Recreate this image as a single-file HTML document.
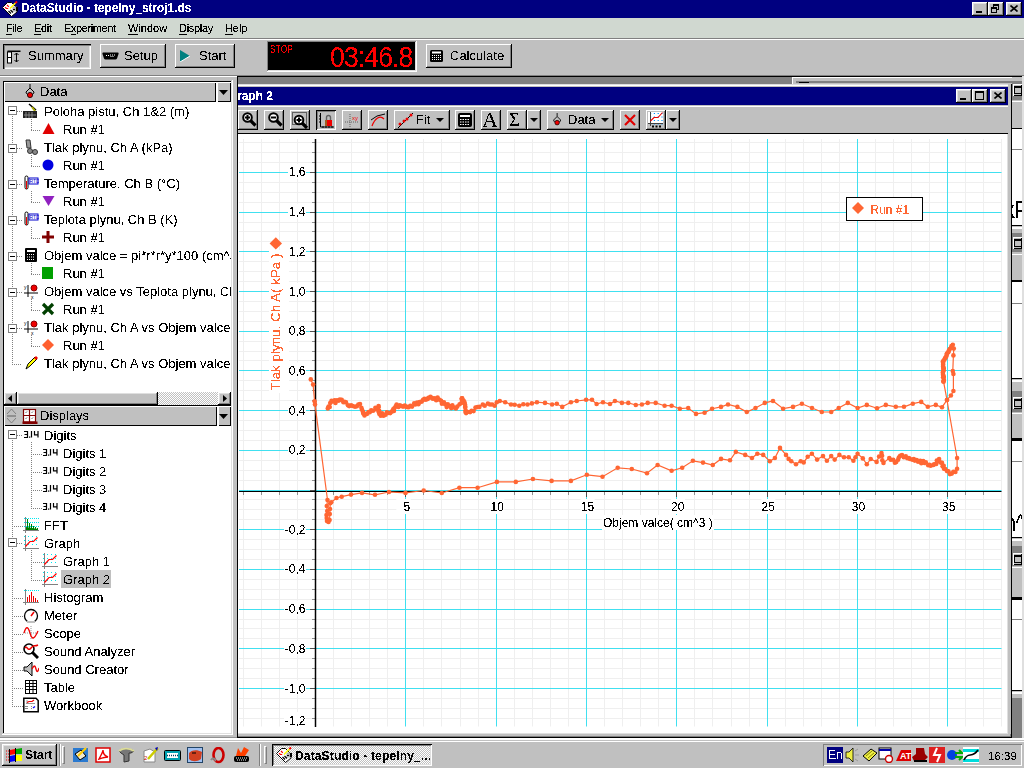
<!DOCTYPE html><html><head><meta charset="utf-8"><title>DataStudio</title><style>

*{box-sizing:border-box;margin:0;padding:0}
html,body{width:1024px;height:768px;overflow:hidden;background:#c0c0c0;font-family:"Liberation Sans",sans-serif;position:relative}
.a{position:absolute}
.t{position:absolute;white-space:nowrap;line-height:1;filter:url(#crisp)}
.raised{background:#c0c0c0;box-shadow:inset -1px -1px #000,inset 1px 1px #fff,inset -2px -2px #808080,inset 2px 2px #dfdfdf}
.raised1{background:#c0c0c0;box-shadow:inset -1px -1px #000,inset 1px 1px #fff,inset -2px -2px #808080}
.pressed{background:#c0c0c0;box-shadow:inset 1px 1px #000,inset -1px -1px #fff,inset 2px 2px #808080,inset -2px -2px #dfdfdf}
.sunken{box-shadow:inset 1px 1px #808080,inset -1px -1px #fff,inset 2px 2px #000,inset -2px -2px #dfdfdf}
.tbtn{position:absolute;width:16px;height:14px;background:#c0c0c0;box-shadow:inset -1px -1px #000,inset 1px 1px #fff,inset -2px -2px #808080,inset 2px 2px #dfdfdf}
.tree{font-size:13px;color:#000}
u{text-decoration:none;border-bottom:1px solid #000}

</style></head><body>
<svg width="0" height="0" style="position:absolute"><filter id="crisp" color-interpolation-filters="sRGB"><feComponentTransfer><feFuncA type="discrete" tableValues="0 0 0 0 1 1 1 1 1"/></feComponentTransfer></filter></svg>
<div class="a" style="left:0;top:0;width:1024px;height:18px;background:#000080"></div>
<svg class="a" style="left:0;top:0" width="19" height="18" viewBox="0 0 19 18"><path d="M2.5 7.5 L7.5 2.5 L11.5 2.5 L17 8 L17 12 L11.5 16.5 Z" fill="#fff" stroke="#000"/><path d="M7 5 L8.8 6.8 M5 7.2 L6.5 8.5 L8.2 8.5" stroke="#f00" stroke-width="1.2" fill="none"/><rect x="12.5" y="6.5" width="4" height="5" fill="#b0b0b0"/><rect x="16" y="7" width="2" height="4" fill="#000"/><path d="M8.5 11 L11 13.5 M10.5 10 L13 12.5 M13 9.5 H15" stroke="#000" stroke-width="1.2"/><path d="M10 8.5 L15.5 3" stroke="#ff0" stroke-width="1.6"/><path d="M15.3 3.2 L17 1.5" stroke="#f00" stroke-width="1.8"/></svg>
<div class="t" style="left:21px;top:2px;font-size:12px;font-weight:bold;color:#fff;letter-spacing:-0.08px">DataStudio - tepelny_stroj1.ds</div>
<div class="tbtn" style="left:972px;top:2px"><div class="a" style="left:4px;top:9px;width:6px;height:2px;background:#000"></div></div>
<div class="tbtn" style="left:988px;top:2px"><div class="a" style="left:5px;top:2px;width:6px;height:6px;border:1px solid #000;border-top-width:2px"></div><div class="a" style="left:3px;top:5px;width:6px;height:6px;border:1px solid #000;border-top-width:2px;background:#c0c0c0"></div></div>
<div class="tbtn" style="left:1006px;top:2px"><svg class="a" style="left:4px;top:3px" width="8" height="7"><path d="M0.5 0.5 L7.5 6.5 M7.5 0.5 L0.5 6.5" stroke="#000" stroke-width="1.6"/></svg></div>
<div class="a" style="left:0;top:18px;width:1024px;height:20px;background:#d0d8d0"></div>
<div class="a" style="left:0;top:38px;width:1024px;height:1px;background:#808080"></div>
<div class="a" style="left:0;top:39px;width:1024px;height:1px;background:#fff"></div>
<div class="t" style="left:6px;top:23px;font-size:11px;color:#000;letter-spacing:-0.4px"><u>F</u>ile</div>
<div class="t" style="left:34px;top:23px;font-size:11px;color:#000;letter-spacing:-0.3px"><u>E</u>dit</div>
<div class="t" style="left:64px;top:23px;font-size:11px;color:#000;letter-spacing:-0.4px">E<u>x</u>periment</div>
<div class="t" style="left:128px;top:23px;font-size:11px;color:#000;letter-spacing:0px"><u>W</u>indow</div>
<div class="t" style="left:179px;top:23px;font-size:11px;color:#000;letter-spacing:-0.3px"><u>D</u>isplay</div>
<div class="t" style="left:225px;top:23px;font-size:11px;color:#000;letter-spacing:-0.1px"><u>H</u>elp</div>
<div class="a" style="left:3px;top:44px;width:88px;height:25px;background:#c0c0c0;box-shadow:inset 1px 1px #000,inset 2px 2px #808080,inset -1px -1px #fff,inset -2px -2px #dfdfdf"></div>
<svg class="a" style="left:7px;top:50px" width="14" height="14" viewBox="0 0 14 14">
<rect x="0.5" y="0.5" width="13" height="1.5" fill="#000"/>
<rect x="0.5" y="2" width="4" height="11" fill="#fff" stroke="#000"/><line x1="0.5" y1="7.5" x2="4.5" y2="7.5" stroke="#000"/>
<path d="M9.5 3 V12 M7.5 5 L9.5 3 L11.5 5 M7.5 10 L9.5 12 L11.5 10" stroke="#000" fill="none"/>
</svg>
<div class="t" style="left:28px;top:49px;font-size:13px">Summary</div>
<div class="a raised1" style="left:100px;top:44px;width:66px;height:24px"></div>
<svg class="a" style="left:102px;top:52px" width="17" height="8" viewBox="0 0 17 8"><path d="M1 0.5 H16 Q17 0.5 16.5 2 L15 6.5 Q14.5 7.5 13.5 7.5 H3.5 Q2.5 7.5 2 6.5 L0.5 2 Q0 0.5 1 0.5Z" fill="#000"/><path d="M4 3.5 H7 M8 3 H13 M8.5 4.5 H12.5" stroke="#fff" stroke-dasharray="1 1"/></svg>
<div class="t" style="left:124px;top:49px;font-size:13px">Setup</div>
<div class="a raised1" style="left:175px;top:44px;width:60px;height:24px"></div>
<svg class="a" style="left:180px;top:50px" width="10" height="12"><path d="M0 0 L10 6 L0 12 Z" fill="#008080"/><path d="M0 12 L10 6" stroke="#fff"/></svg>
<div class="t" style="left:199px;top:49px;font-size:13px">Start</div>
<div class="a" style="left:267px;top:41px;width:150px;height:31px;background:#000;box-shadow:inset -1px -1px #fff,inset 1px 1px #808080,inset -2px -2px #dfdfdf"></div>
<div class="t" style="left:270px;top:45px;font-size:8px;color:#f00;letter-spacing:0.4px;transform:scaleY(1.25);transform-origin:0 0">STOP</div>
<div class="t" style="left:330px;top:43px;font-size:26.5px;color:#f00;letter-spacing:-0.85px;transform:scaleY(1.1);transform-origin:0 0">03:46.8</div>
<div class="a raised1" style="left:426px;top:44px;width:86px;height:24px"></div>
<svg class="a" style="left:430px;top:50px" width="13" height="12" viewBox="0 0 13 12"><rect x="0" y="0" width="13" height="12" rx="1.5" fill="#000"/><rect x="2" y="1.5" width="9" height="2" fill="#fff"/><path d="M2 5.5 H11 M2 7.5 H11 M2 9.5 H11" stroke="#fff" stroke-dasharray="1 1"/></svg>
<div class="t" style="left:450px;top:49px;font-size:13px">Calculate</div>
<div class="a" style="left:0;top:75px;width:1024px;height:1px;background:#808080"></div>
<div class="a" style="left:0;top:76px;width:237px;height:1px;background:#fff"></div>
<div class="a" style="left:3px;top:81px;width:229px;height:325px;background:#fff;border-left:1px solid #000;border-top:1px solid #000"></div>
<div class="a" style="left:4px;top:82px;width:212px;height:20px;background:#c0c0c0;box-shadow:inset 1px 1px #fff,inset -1px -1px #000"></div>
<div class="a" style="left:217px;top:82px;width:14px;height:20px;background:#c0c0c0;box-shadow:inset 1px 1px #fff,inset -1px -1px #000"></div>
<svg class="a" style="left:219px;top:90px" width="9" height="5"><path d="M0 0 H9 L4.5 5Z" fill="#000"/></svg>
<svg class="a" style="left:23px;top:84px" width="16" height="16" viewBox="0 0 16 16"><path d="M7 0 V4 M7 4 L3 8 M7 4 L11 8 M3 8 C3 12 11 12 11 8" stroke="#000" fill="none"/><circle cx="7" cy="11" r="2.6" fill="#e00" stroke="#000" stroke-width="0.8"/></svg>
<div class="t tree" style="left:40px;top:85px">Data</div>
<div class="a" style="left:4px;top:102px;width:227px;height:290px;overflow:hidden">
<div class="a" style="left:8px;top:14px;width:1px;height:247px;background:repeating-linear-gradient(180deg,#808080 0 1px,transparent 1px 2px)"></div>
<div class="a" style="left:4px;top:4px;width:9px;height:9px;border:1px solid #808080;background:#fff"><div class="a" style="left:1px;top:3px;width:5px;height:1px;background:#000"></div></div>
<div class="a" style="left:13px;top:9px;width:6px;height:1px;background:repeating-linear-gradient(90deg,#808080 0 1px,transparent 1px 2px)"></div>
<svg class="a" style="left:19px;top:1px" width="16" height="16" viewBox="0 0 16 16"><path d="M6 1 L13 7" stroke="#000" stroke-width="1.5"/><path d="M9 4 L12 8" stroke="#aa0" stroke-width="2"/><rect x="0" y="8" width="14" height="7" fill="#222"/><path d="M3 9 V15 M6 9 V15 M9 9 V15 M1 12 H13" stroke="#888" stroke-width="1"/></svg>
<div class="t tree" style="left:40px;top:3px;">Poloha pistu, Ch 1&amp;2 (m)</div>
<div class="a" style="left:27px;top:17px;width:1px;height:11px;background:repeating-linear-gradient(180deg,#808080 0 1px,transparent 1px 2px)"></div>
<div class="a" style="left:27px;top:28px;width:10px;height:1px;background:repeating-linear-gradient(90deg,#808080 0 1px,transparent 1px 2px)"></div>
<svg class="a" style="left:37px;top:19px" width="16" height="16" viewBox="0 0 16 16"><path d="M1.5 13 L7.5 2 L13.5 13Z" fill="#e00000"/></svg>
<div class="t tree" style="left:59px;top:21px;">Run #1</div>
<div class="a" style="left:4px;top:42px;width:9px;height:9px;border:1px solid #808080;background:#fff"><div class="a" style="left:1px;top:3px;width:5px;height:1px;background:#000"></div></div>
<div class="a" style="left:13px;top:46px;width:6px;height:1px;background:repeating-linear-gradient(90deg,#808080 0 1px,transparent 1px 2px)"></div>
<svg class="a" style="left:19px;top:37px" width="16" height="16" viewBox="0 0 16 16"><path d="M3 1 L7 1 L8 9 L4 9Z" fill="#999" stroke="#333"/><circle cx="7" cy="12" r="2.5" fill="#888" stroke="#333"/><circle cx="12" cy="13" r="2.5" fill="#888" stroke="#333"/></svg>
<div class="t tree" style="left:40px;top:39px;">Tlak plynu, Ch A (kPa)</div>
<div class="a" style="left:27px;top:53px;width:1px;height:11px;background:repeating-linear-gradient(180deg,#808080 0 1px,transparent 1px 2px)"></div>
<div class="a" style="left:27px;top:64px;width:10px;height:1px;background:repeating-linear-gradient(90deg,#808080 0 1px,transparent 1px 2px)"></div>
<svg class="a" style="left:37px;top:55px" width="16" height="16" viewBox="0 0 16 16"><circle cx="7" cy="8" r="5.5" fill="#0000e0"/></svg>
<div class="t tree" style="left:59px;top:57px;">Run #1</div>
<div class="a" style="left:4px;top:78px;width:9px;height:9px;border:1px solid #808080;background:#fff"><div class="a" style="left:1px;top:3px;width:5px;height:1px;background:#000"></div></div>
<div class="a" style="left:13px;top:82px;width:6px;height:1px;background:repeating-linear-gradient(90deg,#808080 0 1px,transparent 1px 2px)"></div>
<svg class="a" style="left:19px;top:73px" width="16" height="16" viewBox="0 0 16 16"><rect x="2" y="1" width="3" height="13" rx="1.5" fill="#fff" stroke="#000"/><rect x="3" y="6" width="1" height="8" fill="#e00"/><rect x="6" y="3" width="9" height="6" fill="#fff" stroke="#00c" stroke-width="1"/><text x="6.5" y="8" font-size="5" fill="#00c" font-family="Liberation Sans">RTD</text></svg>
<div class="t tree" style="left:40px;top:75px;">Temperature, Ch B (&deg;C)</div>
<div class="a" style="left:27px;top:89px;width:1px;height:11px;background:repeating-linear-gradient(180deg,#808080 0 1px,transparent 1px 2px)"></div>
<div class="a" style="left:27px;top:100px;width:10px;height:1px;background:repeating-linear-gradient(90deg,#808080 0 1px,transparent 1px 2px)"></div>
<svg class="a" style="left:37px;top:91px" width="16" height="16" viewBox="0 0 16 16"><path d="M1.5 3 L13.5 3 L7.5 13Z" fill="#9020c0"/></svg>
<div class="t tree" style="left:59px;top:93px;">Run #1</div>
<div class="a" style="left:4px;top:114px;width:9px;height:9px;border:1px solid #808080;background:#fff"><div class="a" style="left:1px;top:3px;width:5px;height:1px;background:#000"></div></div>
<div class="a" style="left:13px;top:118px;width:6px;height:1px;background:repeating-linear-gradient(90deg,#808080 0 1px,transparent 1px 2px)"></div>
<svg class="a" style="left:19px;top:109px" width="16" height="16" viewBox="0 0 16 16"><rect x="2" y="1" width="3" height="13" rx="1.5" fill="#fff" stroke="#000"/><rect x="3" y="6" width="1" height="8" fill="#e00"/><rect x="6" y="3" width="9" height="6" fill="#fff" stroke="#00c" stroke-width="1"/><text x="6.5" y="8" font-size="5" fill="#00c" font-family="Liberation Sans">RTD</text></svg>
<div class="t tree" style="left:40px;top:111px;">Teplota plynu, Ch B (K)</div>
<div class="a" style="left:27px;top:125px;width:1px;height:11px;background:repeating-linear-gradient(180deg,#808080 0 1px,transparent 1px 2px)"></div>
<div class="a" style="left:27px;top:136px;width:10px;height:1px;background:repeating-linear-gradient(90deg,#808080 0 1px,transparent 1px 2px)"></div>
<svg class="a" style="left:37px;top:127px" width="16" height="16" viewBox="0 0 16 16"><path d="M7 2 V14 M1 8 H13" stroke="#800000" stroke-width="3"/></svg>
<div class="t tree" style="left:59px;top:129px;">Run #1</div>
<div class="a" style="left:4px;top:150px;width:9px;height:9px;border:1px solid #808080;background:#fff"><div class="a" style="left:1px;top:3px;width:5px;height:1px;background:#000"></div></div>
<div class="a" style="left:13px;top:154px;width:6px;height:1px;background:repeating-linear-gradient(90deg,#808080 0 1px,transparent 1px 2px)"></div>
<svg class="a" style="left:19px;top:145px" width="16" height="16" viewBox="0 0 16 16"><rect x="2" y="1" width="12" height="14" rx="1" fill="#000"/><rect x="4" y="3" width="8" height="2" fill="#fff"/><path d="M4 7.5 H12 M4 10 H12 M4 12.5 H12" stroke="#fff" stroke-dasharray="1 1"/></svg>
<div class="t tree" style="left:40px;top:147px;">Objem valce = pi*r*r*y*100 (cm^3)</div>
<div class="a" style="left:27px;top:161px;width:1px;height:11px;background:repeating-linear-gradient(180deg,#808080 0 1px,transparent 1px 2px)"></div>
<div class="a" style="left:27px;top:172px;width:10px;height:1px;background:repeating-linear-gradient(90deg,#808080 0 1px,transparent 1px 2px)"></div>
<svg class="a" style="left:37px;top:163px" width="16" height="16" viewBox="0 0 16 16"><rect x="1" y="2" width="11" height="12" fill="#00a000"/></svg>
<div class="t tree" style="left:59px;top:165px;">Run #1</div>
<div class="a" style="left:4px;top:186px;width:9px;height:9px;border:1px solid #808080;background:#fff"><div class="a" style="left:1px;top:3px;width:5px;height:1px;background:#000"></div></div>
<div class="a" style="left:13px;top:190px;width:6px;height:1px;background:repeating-linear-gradient(90deg,#808080 0 1px,transparent 1px 2px)"></div>
<svg class="a" style="left:19px;top:181px" width="16" height="16" viewBox="0 0 16 16"><path d="M5 2 V14 M1 10 H15" stroke="#000"/><circle cx="11" cy="5" r="3" fill="#e00" stroke="#800"/><text x="1" y="6" font-size="5" font-family="Liberation Sans">y</text><text x="8" y="16" font-size="5" font-family="Liberation Sans">x</text></svg>
<div class="t tree" style="left:40px;top:183px;">Objem valce vs Teplota plynu, Ch A</div>
<div class="a" style="left:27px;top:197px;width:1px;height:11px;background:repeating-linear-gradient(180deg,#808080 0 1px,transparent 1px 2px)"></div>
<div class="a" style="left:27px;top:208px;width:10px;height:1px;background:repeating-linear-gradient(90deg,#808080 0 1px,transparent 1px 2px)"></div>
<svg class="a" style="left:37px;top:199px" width="16" height="16" viewBox="0 0 16 16"><path d="M2 3 L12 13 M12 3 L2 13" stroke="#004000" stroke-width="3.2"/></svg>
<div class="t tree" style="left:59px;top:201px;">Run #1</div>
<div class="a" style="left:4px;top:222px;width:9px;height:9px;border:1px solid #808080;background:#fff"><div class="a" style="left:1px;top:3px;width:5px;height:1px;background:#000"></div></div>
<div class="a" style="left:13px;top:226px;width:6px;height:1px;background:repeating-linear-gradient(90deg,#808080 0 1px,transparent 1px 2px)"></div>
<svg class="a" style="left:19px;top:217px" width="16" height="16" viewBox="0 0 16 16"><path d="M5 2 V14 M1 10 H15" stroke="#000"/><circle cx="11" cy="5" r="3" fill="#e00" stroke="#800"/><text x="1" y="6" font-size="5" font-family="Liberation Sans">y</text><text x="8" y="16" font-size="5" font-family="Liberation Sans">x</text></svg>
<div class="t tree" style="left:40px;top:219px;">Tlak plynu, Ch A vs Objem valce</div>
<div class="a" style="left:27px;top:233px;width:1px;height:11px;background:repeating-linear-gradient(180deg,#808080 0 1px,transparent 1px 2px)"></div>
<div class="a" style="left:27px;top:244px;width:10px;height:1px;background:repeating-linear-gradient(90deg,#808080 0 1px,transparent 1px 2px)"></div>
<svg class="a" style="left:37px;top:235px" width="16" height="16" viewBox="0 0 16 16"><path d="M7 2 L13 8 L7 14 L1 8Z" fill="#ff6030"/></svg>
<div class="t tree" style="left:59px;top:237px;">Run #1</div>
<div class="a" style="left:8px;top:262px;width:10px;height:1px;background:repeating-linear-gradient(90deg,#808080 0 1px,transparent 1px 2px)"></div>
<svg class="a" style="left:19px;top:253px" width="16" height="16" viewBox="0 0 16 16"><path d="M3 14 L5 9 L12 2 L14 4 L7 11Z" fill="#ff0" stroke="#000"/><path d="M11 3 L13 1 L15 3 L13 5Z" fill="#e00"/></svg>
<div class="t tree" style="left:40px;top:255px;">Tlak plynu, Ch A vs Objem valce</div>
</div>
<div class="a" style="left:4px;top:392px;width:227px;height:13px;background:repeating-conic-gradient(#c0c0c0 0 25%,#fff 0 50%) 0 0/2px 2px"></div>
<div class="a raised" style="left:4px;top:392px;width:13px;height:13px"></div>
<svg class="a" style="left:8px;top:395px" width="4" height="7"><path d="M4 0 V7 L0 3.5Z" fill="#000"/></svg>
<div class="a raised" style="left:17px;top:392px;width:141px;height:13px"></div>
<div class="a raised" style="left:218px;top:392px;width:13px;height:13px"></div>
<svg class="a" style="left:223px;top:395px" width="4" height="7"><path d="M0 0 V7 L4 3.5Z" fill="#000"/></svg>
<div class="a" style="left:3px;top:405px;width:229px;height:328px;background:#fff;border-left:1px solid #000;border-top:1px solid #000"></div>
<div class="a" style="left:4px;top:406px;width:213px;height:20px;background:#c0c0c0;box-shadow:inset 1px 1px #fff,inset -1px -1px #000"></div>
<div class="a" style="left:218px;top:406px;width:13px;height:20px;background:#c0c0c0;box-shadow:inset 1px 1px #fff,inset -1px -1px #000"></div>
<svg class="a" style="left:219px;top:414px" width="9" height="5"><path d="M0 0 H9 L4.5 5Z" fill="#000"/></svg>
<svg class="a" style="left:6px;top:408px" width="11" height="16"><path d="M1 6 L5.5 1 L10 6 M1 10 L5.5 15 L10 10" stroke="#808080" fill="none"/><path d="M1 8 H10" stroke="#808080" stroke-width="1.5"/></svg>
<svg class="a" style="left:22px;top:408px" width="16" height="17" viewBox="0 0 16 17"><rect x="1.5" y="1.5" width="12" height="12.5" fill="#fff" stroke="#800000" stroke-width="1.2"/><path d="M7.5 1.5 V14 M1.5 7.5 H13.5" stroke="#800000" stroke-width="1.2"/><path d="M3.5 5 L5 3.5 M9.5 5 L11 3.5 M3.5 11 L5 9.5 M9.5 11 L11 9.5" stroke="#444" stroke-width="0.8"/><rect x="0.5" y="13.5" width="15" height="2.5" fill="#800000"/></svg>
<div class="t tree" style="left:40px;top:409px">Displays</div>
<div class="a" style="left:12px;top:440px;width:1px;height:266px;background:repeating-linear-gradient(180deg,#808080 0 1px,transparent 1px 2px)"></div>
<div class="a" style="left:8px;top:430px;width:9px;height:9px;border:1px solid #808080;background:#fff"><div class="a" style="left:1px;top:3px;width:5px;height:1px;background:#000"></div></div>
<div class="a" style="left:17px;top:435px;width:6px;height:1px;background:repeating-linear-gradient(90deg,#808080 0 1px,transparent 1px 2px)"></div>
<div class="a" style="left:31px;top:442px;width:1px;height:66px;background:repeating-linear-gradient(180deg,#808080 0 1px,transparent 1px 2px)"></div>
<svg class="a" style="left:23px;top:427px" width="16" height="16" viewBox="0 0 16 16"><path d="M1 4.5 H4.5 V10.5 H1 M1.5 7.5 H4.5 M8.5 4 V10.5 M11.5 4 V7.8 H15 M15 4 V10.5" stroke="#000" stroke-width="1.2" fill="none"/><rect x="6" y="9.5" width="1.3" height="1.2"/></svg>
<div class="t tree" style="left:44px;top:429px;">Digits</div>
<div class="a" style="left:31px;top:454px;width:11px;height:1px;background:repeating-linear-gradient(90deg,#808080 0 1px,transparent 1px 2px)"></div>
<svg class="a" style="left:42px;top:445px" width="16" height="16" viewBox="0 0 16 16"><path d="M1 4.5 H4.5 V10.5 H1 M1.5 7.5 H4.5 M8.5 4 V10.5 M11.5 4 V7.8 H15 M15 4 V10.5" stroke="#000" stroke-width="1.2" fill="none"/><rect x="6" y="9.5" width="1.3" height="1.2"/></svg>
<div class="t tree" style="left:63px;top:447px;">Digits 1</div>
<div class="a" style="left:31px;top:472px;width:11px;height:1px;background:repeating-linear-gradient(90deg,#808080 0 1px,transparent 1px 2px)"></div>
<svg class="a" style="left:42px;top:463px" width="16" height="16" viewBox="0 0 16 16"><path d="M1 4.5 H4.5 V10.5 H1 M1.5 7.5 H4.5 M8.5 4 V10.5 M11.5 4 V7.8 H15 M15 4 V10.5" stroke="#000" stroke-width="1.2" fill="none"/><rect x="6" y="9.5" width="1.3" height="1.2"/></svg>
<div class="t tree" style="left:63px;top:465px;">Digits 2</div>
<div class="a" style="left:31px;top:490px;width:11px;height:1px;background:repeating-linear-gradient(90deg,#808080 0 1px,transparent 1px 2px)"></div>
<svg class="a" style="left:42px;top:481px" width="16" height="16" viewBox="0 0 16 16"><path d="M1 4.5 H4.5 V10.5 H1 M1.5 7.5 H4.5 M8.5 4 V10.5 M11.5 4 V7.8 H15 M15 4 V10.5" stroke="#000" stroke-width="1.2" fill="none"/><rect x="6" y="9.5" width="1.3" height="1.2"/></svg>
<div class="t tree" style="left:63px;top:483px;">Digits 3</div>
<div class="a" style="left:31px;top:508px;width:11px;height:1px;background:repeating-linear-gradient(90deg,#808080 0 1px,transparent 1px 2px)"></div>
<svg class="a" style="left:42px;top:499px" width="16" height="16" viewBox="0 0 16 16"><path d="M1 4.5 H4.5 V10.5 H1 M1.5 7.5 H4.5 M8.5 4 V10.5 M11.5 4 V7.8 H15 M15 4 V10.5" stroke="#000" stroke-width="1.2" fill="none"/><rect x="6" y="9.5" width="1.3" height="1.2"/></svg>
<div class="t tree" style="left:63px;top:501px;">Digits 4</div>
<div class="a" style="left:12px;top:526px;width:11px;height:1px;background:repeating-linear-gradient(90deg,#808080 0 1px,transparent 1px 2px)"></div>
<svg class="a" style="left:23px;top:517px" width="16" height="16" viewBox="0 0 16 16"><path d="M1 1.5 H16 M1 5.5 H16 M1 9.5 H16" stroke="#00e8f0" stroke-dasharray="1 1"/><path d="M2.5 0 V16 M0 13.5 H16" stroke="#808080"/><path d="M3 13 V10 L15 12 V13Z" fill="#008000"/><path d="M4.5 2 V13 M6.5 6 V13 M8.5 7 V13 M10.5 9 V13 M12.5 10 V13 M14.5 11 V13" stroke="#008000"/></svg>
<div class="t tree" style="left:44px;top:519px;">FFT</div>
<div class="a" style="left:8px;top:538px;width:9px;height:9px;border:1px solid #808080;background:#fff"><div class="a" style="left:1px;top:3px;width:5px;height:1px;background:#000"></div></div>
<div class="a" style="left:17px;top:543px;width:6px;height:1px;background:repeating-linear-gradient(90deg,#808080 0 1px,transparent 1px 2px)"></div>
<div class="a" style="left:31px;top:550px;width:1px;height:30px;background:repeating-linear-gradient(180deg,#808080 0 1px,transparent 1px 2px)"></div>
<svg class="a" style="left:23px;top:535px" width="16" height="16" viewBox="0 0 16 16"><path d="M1 1.5 H16 M1 5.5 H16 M1 9.5 H16 M1 13.5 H16" stroke="#00e8f0" stroke-dasharray="1 3"/><path d="M2.5 0 V16 M0 13.5 H16" stroke="#808080"/><path d="M2.5 11.5 L7 6.5 H10.5 L14.5 2.5" stroke="#f00" fill="none" stroke-width="1.2"/></svg>
<div class="t tree" style="left:44px;top:537px;">Graph</div>
<div class="a" style="left:31px;top:562px;width:11px;height:1px;background:repeating-linear-gradient(90deg,#808080 0 1px,transparent 1px 2px)"></div>
<svg class="a" style="left:42px;top:553px" width="16" height="16" viewBox="0 0 16 16"><path d="M1 1.5 H16 M1 5.5 H16 M1 9.5 H16 M1 13.5 H16" stroke="#00e8f0" stroke-dasharray="1 3"/><path d="M2.5 0 V16 M0 13.5 H16" stroke="#808080"/><path d="M2.5 11.5 L7 6.5 H10.5 L14.5 2.5" stroke="#f00" fill="none" stroke-width="1.2"/></svg>
<div class="t tree" style="left:63px;top:555px;">Graph 1</div>
<div class="a" style="left:31px;top:580px;width:11px;height:1px;background:repeating-linear-gradient(90deg,#808080 0 1px,transparent 1px 2px)"></div>
<svg class="a" style="left:42px;top:571px" width="16" height="16" viewBox="0 0 16 16"><path d="M1 1.5 H16 M1 5.5 H16 M1 9.5 H16 M1 13.5 H16" stroke="#00e8f0" stroke-dasharray="1 3"/><path d="M2.5 0 V16 M0 13.5 H16" stroke="#808080"/><path d="M2.5 11.5 L7 6.5 H10.5 L14.5 2.5" stroke="#f00" fill="none" stroke-width="1.2"/></svg>
<div class="a" style="left:61px;top:570px;width:50px;height:18px;background:#c0c0c0"></div>
<div class="t tree" style="left:63px;top:573px;">Graph 2</div>
<div class="a" style="left:12px;top:598px;width:11px;height:1px;background:repeating-linear-gradient(90deg,#808080 0 1px,transparent 1px 2px)"></div>
<svg class="a" style="left:23px;top:589px" width="16" height="16" viewBox="0 0 16 16"><path d="M1 1.5 H16" stroke="#00e8f0" stroke-dasharray="1 1"/><path d="M2.5 0 V16 M0 13.5 H16" stroke="#808080"/><path d="M4.5 8 V13 M6.5 6 V13 M8.5 3 V13 M10.5 7 V13 M12.5 9 V13 M14.5 11 V13" stroke="#e00"/></svg>
<div class="t tree" style="left:44px;top:591px;">Histogram</div>
<div class="a" style="left:12px;top:616px;width:11px;height:1px;background:repeating-linear-gradient(90deg,#808080 0 1px,transparent 1px 2px)"></div>
<svg class="a" style="left:23px;top:607px" width="16" height="16" viewBox="0 0 16 16"><circle cx="8" cy="9" r="6.5" fill="#fff" stroke="#000" stroke-width="1.3"/><path d="M8 9 L11 5" stroke="#e00" stroke-width="1.5"/><rect x="4" y="14" width="8" height="2" fill="#c0c0c0"/></svg>
<div class="t tree" style="left:44px;top:609px;">Meter</div>
<div class="a" style="left:12px;top:634px;width:11px;height:1px;background:repeating-linear-gradient(90deg,#808080 0 1px,transparent 1px 2px)"></div>
<svg class="a" style="left:23px;top:625px" width="16" height="16" viewBox="0 0 16 16"><path d="M8 1 V15 M0 8 H16" stroke="#999" stroke-dasharray="1 1"/><path d="M1 8 C3 1 5 1 7 8 C9 15 11 15 15 6" stroke="#e00" fill="none" stroke-width="1.3"/></svg>
<div class="t tree" style="left:44px;top:627px;">Scope</div>
<div class="a" style="left:12px;top:652px;width:11px;height:1px;background:repeating-linear-gradient(90deg,#808080 0 1px,transparent 1px 2px)"></div>
<svg class="a" style="left:23px;top:643px" width="16" height="16" viewBox="0 0 16 16"><circle cx="6" cy="6" r="5" fill="#fff" stroke="#000" stroke-width="1.6"/><path d="M9 9 L15 15" stroke="#000" stroke-width="3"/><path d="M2 5 C4 2 5 9 8 5 S11 4 15 2" stroke="#e00" fill="none" stroke-width="1.4"/></svg>
<div class="t tree" style="left:44px;top:645px;">Sound Analyzer</div>
<div class="a" style="left:12px;top:670px;width:11px;height:1px;background:repeating-linear-gradient(90deg,#808080 0 1px,transparent 1px 2px)"></div>
<svg class="a" style="left:23px;top:661px" width="16" height="16" viewBox="0 0 16 16"><path d="M1 6 H4 L9 1 V15 L4 10 H1Z" fill="#c0c0c0" stroke="#000"/><path d="M9 8 C11 4 12 4 13 8 S15 11 16 7" stroke="#e00" fill="none" stroke-width="1.3"/></svg>
<div class="t tree" style="left:44px;top:663px;">Sound Creator</div>
<div class="a" style="left:12px;top:688px;width:11px;height:1px;background:repeating-linear-gradient(90deg,#808080 0 1px,transparent 1px 2px)"></div>
<svg class="a" style="left:23px;top:679px" width="16" height="16" viewBox="0 0 16 16"><rect x="2.5" y="1.5" width="11" height="13" fill="#fff" stroke="#000"/><path d="M2.5 4.5 H13.5 M2.5 7.5 H13.5 M2.5 10.5 H13.5 M6.5 1.5 V14.5 M10 1.5 V14.5" stroke="#000"/></svg>
<div class="t tree" style="left:44px;top:681px;">Table</div>
<div class="a" style="left:12px;top:706px;width:11px;height:1px;background:repeating-linear-gradient(90deg,#808080 0 1px,transparent 1px 2px)"></div>
<svg class="a" style="left:23px;top:697px" width="16" height="16" viewBox="0 0 16 16"><path d="M0.8 1.3 H13 L15.2 3.5 V14.7 H0.8Z" fill="#fff" stroke="#000" stroke-width="1.5"/><path d="M4 3 V7 M3 6.5 H12" stroke="#999"/><path d="M4 5.5 L6 4.5 L9 4.5 L11 3" stroke="#e00" fill="none" stroke-width="1.2"/><path d="M2 9.5 H5 M2 11.5 H5 M8 9.5 H9 M8 11.5 H9" stroke="#888"/><path d="M10 11 L12 9.5" stroke="#00f" stroke-width="1.2"/></svg>
<div class="t tree" style="left:44px;top:699px;">Workbook</div>
<div class="a" style="left:231px;top:81px;width:1px;height:652px;background:#dfdfdf"></div>
<div class="a" style="left:232px;top:80px;width:1px;height:655px;background:#fff"></div>
<div class="a" style="left:3px;top:733px;width:229px;height:1px;background:#dfdfdf"></div>
<div class="a" style="left:2px;top:734px;width:231px;height:1px;background:#fff"></div>
<div class="a" style="left:237px;top:76px;width:787px;height:662px;background:#808080;border-left:1px solid #000;border-top:1px solid #000"></div>
<div class="a" style="left:792px;top:77px;width:230px;height:7px;background:#c0c0c0;box-shadow:inset 1px 1px #fff"></div>
<div class="a" style="left:796px;top:81px;width:226px;height:2px;background:#808080"></div>
<div class="a" style="left:799px;top:82px;width:10px;height:1px;background:#000"></div>
<div class="a" style="left:238px;top:84px;width:774px;height:654px;background:#c0c0c0;border-top:1px solid #dfdfdf;box-shadow:inset 0 1px #fff,inset -1px -1px #000,inset -2px -2px #808080"></div>
<div class="a" style="left:238px;top:87px;width:770px;height:18px;background:#000080"></div>
<div class="t" style="left:237px;top:90px;font-size:12px;font-weight:bold;color:#fff">raph 2</div>
<div class="tbtn" style="left:956px;top:89px"><div class="a" style="left:4px;top:9px;width:6px;height:2px;background:#000"></div></div>
<div class="tbtn" style="left:972px;top:89px"><div class="a" style="left:3px;top:2px;width:9px;height:9px;border:1px solid #000;border-top-width:2px"></div></div>
<div class="tbtn" style="left:990px;top:89px"><svg class="a" style="left:4px;top:3px" width="8" height="7"><path d="M0.5 0.5 L7.5 6.5 M7.5 0.5 L0.5 6.5" stroke="#000" stroke-width="1.6"/></svg></div>
<div class="a" style="left:238px;top:106px;width:770px;height:1px;background:#fff"></div>
<div class="a" style="left:237px;top:133px;width:771px;height:601px;background:#fff;border-left:1px solid #000;border-top:1px solid #000;box-shadow:inset -1px -1px #dfdfdf"></div>
<svg class="a" style="left:0;top:0" width="1024" height="768" viewBox="0 0 1024 768">
<defs><clipPath id="gc"><rect x="238" y="134" width="767" height="599"/></clipPath></defs>
<g clip-path="url(#gc)">
<path d="M243.5 139 V726.5 M261.5 139 V726.5 M279.5 139 V726.5 M297.5 139 V726.5 M333.5 139 V726.5 M351.5 139 V726.5 M369.5 139 V726.5 M387.5 139 V726.5 M423.5 139 V726.5 M441.5 139 V726.5 M460.5 139 V726.5 M478.5 139 V726.5 M514.5 139 V726.5 M532.5 139 V726.5 M550.5 139 V726.5 M568.5 139 V726.5 M604.5 139 V726.5 M622.5 139 V726.5 M640.5 139 V726.5 M658.5 139 V726.5 M694.5 139 V726.5 M712.5 139 V726.5 M731.5 139 V726.5 M749.5 139 V726.5 M785.5 139 V726.5 M803.5 139 V726.5 M821.5 139 V726.5 M839.5 139 V726.5 M875.5 139 V726.5 M893.5 139 V726.5 M911.5 139 V726.5 M929.5 139 V726.5 M965.5 139 V726.5 M983.5 139 V726.5 M239 718.5 H1001.5 M239 708.5 H1001.5 M239 698.5 H1001.5 M239 678.5 H1001.5 M239 668.5 H1001.5 M239 658.5 H1001.5 M239 638.5 H1001.5 M239 628.5 H1001.5 M239 619.5 H1001.5 M239 599.5 H1001.5 M239 589.5 H1001.5 M239 579.5 H1001.5 M239 559.5 H1001.5 M239 549.5 H1001.5 M239 539.5 H1001.5 M239 519.5 H1001.5 M239 509.5 H1001.5 M239 499.5 H1001.5 M239 480.5 H1001.5 M239 470.5 H1001.5 M239 460.5 H1001.5 M239 440.5 H1001.5 M239 430.5 H1001.5 M239 420.5 H1001.5 M239 400.5 H1001.5 M239 390.5 H1001.5 M239 380.5 H1001.5 M239 360.5 H1001.5 M239 351.5 H1001.5 M239 341.5 H1001.5 M239 321.5 H1001.5 M239 311.5 H1001.5 M239 301.5 H1001.5 M239 281.5 H1001.5 M239 271.5 H1001.5 M239 261.5 H1001.5 M239 241.5 H1001.5 M239 231.5 H1001.5 M239 222.5 H1001.5 M239 202.5 H1001.5 M239 192.5 H1001.5 M239 182.5 H1001.5 M239 162.5 H1001.5 M239 152.5 H1001.5 M239 142.5 H1001.5 M1001.5 139 V726.5" stroke="#efefef" stroke-width="1" fill="none"/>
<path d="M315.5 139 V726.5 M405.5 139 V726.5 M496.5 139 V726.5 M586.5 139 V726.5 M676.5 139 V726.5 M767.5 139 V726.5 M857.5 139 V726.5 M947.5 139 V726.5 M239 688.5 H1001.5 M239 648.5 H1001.5 M239 609.5 H1001.5 M239 569.5 H1001.5 M239 529.5 H1001.5 M239 490.5 H1001.5 M239 450.5 H1001.5 M239 410.5 H1001.5 M239 370.5 H1001.5 M239 331.5 H1001.5 M239 291.5 H1001.5 M239 251.5 H1001.5 M239 212.5 H1001.5 M239 172.5 H1001.5" stroke="#40e0f0" stroke-width="1" fill="none"/>
<rect x="284" y="712.0" width="22" height="15" fill="#fff"/><rect x="284" y="680.0" width="22" height="15" fill="#fff"/><rect x="284" y="640.3" width="22" height="15" fill="#fff"/><rect x="284" y="600.6" width="22" height="15" fill="#fff"/><rect x="284" y="560.9" width="22" height="15" fill="#fff"/><rect x="284" y="521.2" width="22" height="15" fill="#fff"/><rect x="288" y="441.8" width="18" height="15" fill="#fff"/><rect x="288" y="402.1" width="18" height="15" fill="#fff"/><rect x="288" y="362.4" width="18" height="15" fill="#fff"/><rect x="288" y="322.7" width="18" height="15" fill="#fff"/><rect x="288" y="283.0" width="18" height="15" fill="#fff"/><rect x="288" y="243.3" width="18" height="15" fill="#fff"/><rect x="288" y="203.6" width="18" height="15" fill="#fff"/><rect x="288" y="163.9" width="18" height="15" fill="#fff"/><rect x="396.3" y="499" width="14.5" height="15" fill="#fff"/><rect x="490.4" y="499" width="14" height="15" fill="#fff"/><rect x="580.7" y="499" width="14" height="15" fill="#fff"/><rect x="671.0" y="499" width="14" height="15" fill="#fff"/><rect x="761.4" y="499" width="14" height="15" fill="#fff"/><rect x="851.7" y="499" width="14" height="15" fill="#fff"/><rect x="942.0" y="499" width="14" height="15" fill="#fff"/><rect x="269" y="250" width="20" height="143" fill="#fff"/><rect x="602" y="515" width="112" height="15" fill="#fff"/>
<path d="M312 718.5 H315 M312 708.5 H315 M312 698.5 H315 M312 678.5 H315 M312 668.5 H315 M312 658.5 H315 M312 638.5 H315 M312 628.5 H315 M312 619.5 H315 M312 599.5 H315 M312 589.5 H315 M312 579.5 H315 M312 559.5 H315 M312 549.5 H315 M312 539.5 H315 M312 519.5 H315 M312 509.5 H315 M312 499.5 H315 M312 480.5 H315 M312 470.5 H315 M312 460.5 H315 M312 440.5 H315 M312 430.5 H315 M312 420.5 H315 M312 400.5 H315 M312 390.5 H315 M312 380.5 H315 M312 360.5 H315 M312 351.5 H315 M312 341.5 H315 M312 321.5 H315 M312 311.5 H315 M312 301.5 H315 M312 281.5 H315 M312 271.5 H315 M312 261.5 H315 M312 241.5 H315 M312 231.5 H315 M312 222.5 H315 M312 202.5 H315 M312 192.5 H315 M312 182.5 H315 M312 162.5 H315 M312 152.5 H315 M312 142.5 H315 M243.5 491 V495 M261.5 491 V495 M279.5 491 V495 M297.5 491 V495 M333.5 491 V495 M351.5 491 V495 M369.5 491 V495 M387.5 491 V495 M423.5 491 V495 M441.5 491 V495 M460.5 491 V495 M478.5 491 V495 M514.5 491 V495 M532.5 491 V495 M550.5 491 V495 M568.5 491 V495 M604.5 491 V495 M622.5 491 V495 M640.5 491 V495 M658.5 491 V495 M694.5 491 V495 M712.5 491 V495 M731.5 491 V495 M749.5 491 V495 M785.5 491 V495 M803.5 491 V495 M821.5 491 V495 M839.5 491 V495 M875.5 491 V495 M893.5 491 V495 M911.5 491 V495 M929.5 491 V495 M965.5 491 V495 M983.5 491 V495" stroke="#909090" stroke-width="1"/>
<path d="M310 688.5 H315 M310 648.5 H315 M310 609.5 H315 M310 569.5 H315 M310 529.5 H315 M310 490.5 H315 M310 450.5 H315 M310 410.5 H315 M310 370.5 H315 M310 331.5 H315 M310 291.5 H315 M310 251.5 H315 M310 212.5 H315 M310 172.5 H315 M315.5 491 V497 M405.5 491 V497 M496.5 491 V497 M586.5 491 V497 M676.5 491 V497 M767.5 491 V497 M857.5 491 V497 M947.5 491 V497" stroke="#505050" stroke-width="1"/>
<path d="M315.5 139 V727" stroke="#000" stroke-width="1.5"/><path d="M239 491.5 H1001.5" stroke="#000" stroke-width="1.1"/>
<g font-family="Liberation Sans" font-size="12" fill="#000" filter="url(#crisp)"><text x="305.5" y="724.5" text-anchor="end">-1,2</text><text x="305.5" y="692.5" text-anchor="end">-1,0</text><text x="305.5" y="652.8" text-anchor="end">-0,8</text><text x="305.5" y="613.1" text-anchor="end">-0,6</text><text x="305.5" y="573.4" text-anchor="end">-0,4</text><text x="305.5" y="533.7" text-anchor="end">-0,2</text><text x="305.5" y="454.3" text-anchor="end">0,2</text><text x="305.5" y="414.6" text-anchor="end">0,4</text><text x="305.5" y="374.9" text-anchor="end">0,6</text><text x="305.5" y="335.2" text-anchor="end">0,8</text><text x="305.5" y="295.5" text-anchor="end">1,0</text><text x="305.5" y="255.8" text-anchor="end">1,2</text><text x="305.5" y="216.1" text-anchor="end">1,4</text><text x="305.5" y="176.4" text-anchor="end">1,6</text><text x="406.8" y="510.8" text-anchor="middle">5</text><text x="497.2" y="510.8" text-anchor="middle">10</text><text x="587.5" y="510.8" text-anchor="middle">15</text><text x="677.8" y="510.8" text-anchor="middle">20</text><text x="768.2" y="510.8" text-anchor="middle">25</text><text x="858.5" y="510.8" text-anchor="middle">30</text><text x="948.8" y="510.8" text-anchor="middle">35</text></g>
<text x="603" y="527" font-family="Liberation Sans" font-size="12" fill="#000" filter="url(#crisp)">Objem valce( cm^3 )</text>
<text transform="translate(280,390.5) rotate(-90)" font-family="Liberation Sans" font-size="13" fill="#ff6633" filter="url(#crisp)" textLength="137" lengthAdjust="spacingAndGlyphs">Tlak plynu, Ch A( kPa )</text>
<path d="M275.8 237.2 L282 243.4 L275.8 249.6 L269.6 243.4Z" fill="#ff6633"/>
<path d="M310.8 379.4 L313.1 384.6 L314.6 401.3 L315.0 404.4 L327.5 500.0 L326.8 506.0 L327.2 511.0 L326.5 515.0 L326.7 518.0 L327.0 521.0 L328.5 522.0 L329.6 520.0 L329.8 514.0 L330.0 509.0 L330.2 503.3 L331.3 502.3 L336.5 498.0 L341.7 496.7 L351.0 494.6 L362.0 492.9 L375.0 494.8 L389.0 492.0 L405.5 492.9 L423.7 490.5 L441.8 493.0 L459.4 487.7 L477.6 487.7 L496.9 481.9 L515.8 481.9 L532.9 479.0 L551.6 480.9 L570.9 480.9 L586.8 474.8 L602.5 476.7 L617.7 467.8 L631.8 469.0 L647.0 473.2 L657.6 465.0 L671.6 470.8 L682.2 467.8 L692.9 460.8 L703.0 462.6 L712.8 465.0 L721.0 458.9 L730.0 460.3 L735.8 451.9 L745.2 454.9 L752.0 458.0 L757.3 453.7 L763.2 454.9 L769.8 461.2 L774.9 458.0 L780.0 447.9 L786.0 454.9 L788.6 458.9 L791.3 461.2 L796.0 464.3 L800.7 461.2 L803.7 462.4 L807.7 456.8 L811.9 453.7 L817.1 459.6 L823.0 456.1 L826.9 460.8 L831.2 456.1 L834.7 459.6 L839.4 454.9 L844.0 457.3 L848.7 457.3 L853.4 460.8 L855.5 457.3 L857.6 453.7 L862.8 458.4 L866.8 464.3 L870.7 459.0 L876.6 461.9 L879.1 456.5 L881.5 453.1 L882.1 455.7 L882.3 460.2 L883.5 462.9 L889.3 458.0 L890.8 459.7 L893.2 459.8 L894.9 462.7 L896.2 461.9 L898.1 459.7 L898.8 457.5 L900.2 455.7 L902.0 455.0 L903.8 457.2 L905.8 456.4 L907.3 458.3 L908.9 458.0 L910.0 459.0 L912.4 459.8 L913.8 459.1 L914.8 460.6 L916.7 460.0 L918.1 461.7 L920.3 460.8 L921.3 463.3 L923.2 461.1 L924.5 462.9 L925.8 462.3 L928.2 465.3 L929.4 464.8 L930.7 465.8 L933.3 464.9 L934.4 464.3 L936.2 463.9 L936.8 460.5 L938.6 461.2 L939.1 459.0 L940.6 462.5 L942.0 462.9 L942.6 466.2 L943.7 465.8 L944.0 468.8 L945.3 469.0 L946.9 471.0 L948.4 471.4 L949.9 474.1 L951.8 473.6 L953.4 471.8 L955.4 471.9 L957.1 468.8 L957.1 458.0 L947.0 400.0 L950.9 395.5 L953.4 391.0 L953.4 374.0 L952.8 371.0 L953.4 355.4 L953.8 348.6 L952.8 344.7 L951.5 346.1 L951.1 347.7 L949.7 349.1 L948.9 350.5 L948.3 352.3 L947.2 353.2 L946.7 354.0 L946.6 355.7 L945.7 357.4 L945.0 358.3 L944.4 359.7 L943.0 361.3 L943.1 362.5 L943.1 364.0 L943.1 365.0 L943.1 366.8 L943.4 367.9 L943.7 368.2 L943.3 370.5 L943.6 370.4 L942.9 372.1 L942.9 372.9 L943.0 374.8 L943.7 376.4 L943.1 377.3 L943.7 377.6 L943.9 380.1 L943.3 381.3 L943.6 381.8 L947.0 400.0 L942.0 407.2 L935.8 404.9 L927.8 406.8 L921.2 401.9 L912.8 403.7 L904.0 406.8 L895.8 406.8 L885.8 404.9 L877.0 408.2 L866.8 404.9 L857.6 408.0 L847.8 402.9 L838.7 408.0 L831.2 412.0 L821.8 412.0 L812.0 408.0 L801.9 403.8 L793.0 406.9 L783.1 408.7 L773.0 401.0 L764.8 402.9 L755.5 408.0 L746.8 412.0 L737.4 406.9 L728.0 404.5 L721.0 406.9 L712.1 408.7 L704.6 412.7 L696.0 413.9 L688.2 408.0 L679.8 408.7 L671.6 405.7 L664.6 405.7 L655.7 402.9 L647.7 402.9 L641.9 404.5 L635.8 405.0 L628.3 402.9 L621.9 402.9 L614.9 401.0 L610.0 404.0 L603.0 402.2 L596.6 404.0 L592.0 399.8 L586.1 399.8 L576.7 401.0 L570.9 402.2 L562.2 406.9 L556.8 403.8 L552.1 404.5 L545.0 402.9 L536.9 402.2 L531.9 403.4 L527.5 404.5 L523.3 404.3 L519.3 405.7 L514.7 404.7 L511.0 404.5 L505.2 402.2 L499.8 401.0 L496.8 402.3 L494.7 405.7 L492.2 404.5 L490.0 404.5 L487.9 403.6 L484.7 405.7 L482.8 404.5 L479.4 406.9 L477.5 407.0 L475.5 407.6 L473.6 411.1 L471.6 410.8 L470.1 412.1 L467.7 412.0 L466.1 413.1 L465.5 412.0 L465.6 410.2 L465.1 406.9 L465.3 407.1 L465.1 404.8 L464.5 402.2 L463.7 400.9 L462.2 398.3 L461.8 398.3 L461.8 399.6 L461.4 403.0 L459.6 404.2 L457.3 406.6 L455.9 408.4 L453.9 407.5 L452.4 405.4 L451.2 408.1 L449.7 406.1 L447.8 404.4 L446.7 407.1 L445.1 404.2 L443.9 402.2 L441.9 403.8 L441.1 400.8 L439.5 399.8 L437.6 397.6 L436.2 400.2 L434.8 398.3 L433.0 398.8 L432.0 398.1 L430.5 396.9 L428.5 397.8 L427.7 398.9 L425.8 399.8 L424.5 398.7 L423.1 399.8 L421.8 401.6 L419.7 402.0 L418.4 404.3 L417.1 402.6 L415.3 404.5 L414.2 403.3 L412.1 406.6 L410.3 405.9 L408.6 407.2 L407.5 406.9 L406.2 407.0 L404.8 405.6 L403.0 406.6 L401.2 406.0 L399.8 405.3 L398.5 407.0 L396.6 404.5 L395.6 406.6 L394.3 408.2 L393.9 410.9 L393.2 409.2 L391.9 411.6 L390.2 413.1 L388.3 413.0 L386.8 412.2 L385.6 414.7 L383.6 415.7 L382.1 413.2 L380.8 415.7 L379.4 413.9 L378.8 412.1 L379.1 412.5 L379.2 410.8 L378.5 407.3 L378.6 406.1 L376.6 409.4 L375.4 407.7 L373.1 410.8 L371.2 410.4 L369.7 412.3 L368.5 412.1 L366.9 413.9 L364.5 415.5 L363.4 413.6 L363.1 412.7 L363.1 411.7 L362.0 409.8 L361.4 407.7 L360.0 404.1 L358.3 404.5 L356.9 406.2 L355.0 406.8 L352.8 406.0 L351.1 405.3 L349.2 406.1 L348.0 405.3 L346.0 402.4 L344.6 401.7 L343.4 402.2 L341.7 399.7 L339.8 399.6 L338.8 400.6 L337.0 400.4 L335.5 403.0 L334.6 400.3 L332.8 401.5 L331.5 400.9 L330.2 403.0 L329.7 407.0 L328.6 406.5 L327.8 408.4" stroke="#ff6633" stroke-width="1.2" fill="none"/>
<g fill="#ff6633"><circle cx="310.8" cy="379.4" r="2.3"/><circle cx="313.1" cy="384.6" r="2.3"/><circle cx="314.6" cy="401.3" r="2.3"/><circle cx="315.0" cy="404.4" r="2.3"/><circle cx="327.5" cy="500.0" r="2.3"/><circle cx="326.8" cy="506.0" r="2.3"/><circle cx="327.2" cy="511.0" r="2.3"/><circle cx="326.5" cy="515.0" r="2.3"/><circle cx="326.7" cy="518.0" r="2.3"/><circle cx="327.0" cy="521.0" r="2.3"/><circle cx="328.5" cy="522.0" r="2.3"/><circle cx="329.6" cy="520.0" r="2.3"/><circle cx="329.8" cy="514.0" r="2.3"/><circle cx="330.0" cy="509.0" r="2.3"/><circle cx="330.2" cy="503.3" r="2.3"/><circle cx="331.3" cy="502.3" r="2.3"/><circle cx="336.5" cy="498.0" r="2.3"/><circle cx="341.7" cy="496.7" r="2.3"/><circle cx="351.0" cy="494.6" r="2.3"/><circle cx="362.0" cy="492.9" r="2.3"/><circle cx="375.0" cy="494.8" r="2.3"/><circle cx="389.0" cy="492.0" r="2.3"/><circle cx="405.5" cy="492.9" r="2.3"/><circle cx="423.7" cy="490.5" r="2.3"/><circle cx="441.8" cy="493.0" r="2.3"/><circle cx="459.4" cy="487.7" r="2.3"/><circle cx="477.6" cy="487.7" r="2.3"/><circle cx="496.9" cy="481.9" r="2.3"/><circle cx="515.8" cy="481.9" r="2.3"/><circle cx="532.9" cy="479.0" r="2.3"/><circle cx="551.6" cy="480.9" r="2.3"/><circle cx="570.9" cy="480.9" r="2.3"/><circle cx="586.8" cy="474.8" r="2.3"/><circle cx="602.5" cy="476.7" r="2.3"/><circle cx="617.7" cy="467.8" r="2.3"/><circle cx="631.8" cy="469.0" r="2.3"/><circle cx="647.0" cy="473.2" r="2.3"/><circle cx="657.6" cy="465.0" r="2.3"/><circle cx="671.6" cy="470.8" r="2.3"/><circle cx="682.2" cy="467.8" r="2.3"/><circle cx="692.9" cy="460.8" r="2.3"/><circle cx="703.0" cy="462.6" r="2.3"/><circle cx="712.8" cy="465.0" r="2.3"/><circle cx="721.0" cy="458.9" r="2.3"/><circle cx="730.0" cy="460.3" r="2.3"/><circle cx="735.8" cy="451.9" r="2.3"/><circle cx="745.2" cy="454.9" r="2.3"/><circle cx="752.0" cy="458.0" r="2.3"/><circle cx="757.3" cy="453.7" r="2.3"/><circle cx="763.2" cy="454.9" r="2.3"/><circle cx="769.8" cy="461.2" r="2.3"/><circle cx="774.9" cy="458.0" r="2.3"/><circle cx="780.0" cy="447.9" r="2.3"/><circle cx="786.0" cy="454.9" r="2.3"/><circle cx="788.6" cy="458.9" r="2.3"/><circle cx="791.3" cy="461.2" r="2.3"/><circle cx="796.0" cy="464.3" r="2.3"/><circle cx="800.7" cy="461.2" r="2.3"/><circle cx="803.7" cy="462.4" r="2.3"/><circle cx="807.7" cy="456.8" r="2.3"/><circle cx="811.9" cy="453.7" r="2.3"/><circle cx="817.1" cy="459.6" r="2.3"/><circle cx="823.0" cy="456.1" r="2.3"/><circle cx="826.9" cy="460.8" r="2.3"/><circle cx="831.2" cy="456.1" r="2.3"/><circle cx="834.7" cy="459.6" r="2.3"/><circle cx="839.4" cy="454.9" r="2.3"/><circle cx="844.0" cy="457.3" r="2.3"/><circle cx="848.7" cy="457.3" r="2.3"/><circle cx="853.4" cy="460.8" r="2.3"/><circle cx="855.5" cy="457.3" r="2.3"/><circle cx="857.6" cy="453.7" r="2.3"/><circle cx="862.8" cy="458.4" r="2.3"/><circle cx="866.8" cy="464.3" r="2.3"/><circle cx="870.7" cy="459.0" r="2.3"/><circle cx="876.6" cy="461.9" r="2.3"/><circle cx="879.1" cy="456.5" r="2.3"/><circle cx="881.5" cy="453.1" r="2.3"/><circle cx="882.1" cy="455.7" r="2.3"/><circle cx="882.3" cy="460.2" r="2.3"/><circle cx="883.5" cy="462.9" r="2.3"/><circle cx="889.3" cy="458.0" r="2.3"/><circle cx="890.8" cy="459.7" r="2.3"/><circle cx="893.2" cy="459.8" r="2.3"/><circle cx="894.9" cy="462.7" r="2.3"/><circle cx="896.2" cy="461.9" r="2.3"/><circle cx="898.1" cy="459.7" r="2.3"/><circle cx="898.8" cy="457.5" r="2.3"/><circle cx="900.2" cy="455.7" r="2.3"/><circle cx="902.0" cy="455.0" r="2.3"/><circle cx="903.8" cy="457.2" r="2.3"/><circle cx="905.8" cy="456.4" r="2.3"/><circle cx="907.3" cy="458.3" r="2.3"/><circle cx="908.9" cy="458.0" r="2.3"/><circle cx="910.0" cy="459.0" r="2.3"/><circle cx="912.4" cy="459.8" r="2.3"/><circle cx="913.8" cy="459.1" r="2.3"/><circle cx="914.8" cy="460.6" r="2.3"/><circle cx="916.7" cy="460.0" r="2.3"/><circle cx="918.1" cy="461.7" r="2.3"/><circle cx="920.3" cy="460.8" r="2.3"/><circle cx="921.3" cy="463.3" r="2.3"/><circle cx="923.2" cy="461.1" r="2.3"/><circle cx="924.5" cy="462.9" r="2.3"/><circle cx="925.8" cy="462.3" r="2.3"/><circle cx="928.2" cy="465.3" r="2.3"/><circle cx="929.4" cy="464.8" r="2.3"/><circle cx="930.7" cy="465.8" r="2.3"/><circle cx="933.3" cy="464.9" r="2.3"/><circle cx="934.4" cy="464.3" r="2.3"/><circle cx="936.2" cy="463.9" r="2.3"/><circle cx="936.8" cy="460.5" r="2.3"/><circle cx="938.6" cy="461.2" r="2.3"/><circle cx="939.1" cy="459.0" r="2.3"/><circle cx="940.6" cy="462.5" r="2.3"/><circle cx="942.0" cy="462.9" r="2.3"/><circle cx="942.6" cy="466.2" r="2.3"/><circle cx="943.7" cy="465.8" r="2.3"/><circle cx="944.0" cy="468.8" r="2.3"/><circle cx="945.3" cy="469.0" r="2.3"/><circle cx="946.9" cy="471.0" r="2.3"/><circle cx="948.4" cy="471.4" r="2.3"/><circle cx="949.9" cy="474.1" r="2.3"/><circle cx="951.8" cy="473.6" r="2.3"/><circle cx="953.4" cy="471.8" r="2.3"/><circle cx="955.4" cy="471.9" r="2.3"/><circle cx="957.1" cy="468.8" r="2.3"/><circle cx="957.1" cy="458.0" r="2.3"/><circle cx="947.0" cy="400.0" r="2.3"/><circle cx="950.9" cy="395.5" r="2.3"/><circle cx="953.4" cy="391.0" r="2.3"/><circle cx="953.4" cy="374.0" r="2.3"/><circle cx="952.8" cy="371.0" r="2.3"/><circle cx="953.4" cy="355.4" r="2.3"/><circle cx="953.8" cy="348.6" r="2.3"/><circle cx="952.8" cy="344.7" r="2.3"/><circle cx="951.5" cy="346.1" r="2.3"/><circle cx="951.1" cy="347.7" r="2.3"/><circle cx="949.7" cy="349.1" r="2.3"/><circle cx="948.9" cy="350.5" r="2.3"/><circle cx="948.3" cy="352.3" r="2.3"/><circle cx="947.2" cy="353.2" r="2.3"/><circle cx="946.7" cy="354.0" r="2.3"/><circle cx="946.6" cy="355.7" r="2.3"/><circle cx="945.7" cy="357.4" r="2.3"/><circle cx="945.0" cy="358.3" r="2.3"/><circle cx="944.4" cy="359.7" r="2.3"/><circle cx="943.0" cy="361.3" r="2.3"/><circle cx="943.1" cy="362.5" r="2.3"/><circle cx="943.1" cy="364.0" r="2.3"/><circle cx="943.1" cy="365.0" r="2.3"/><circle cx="943.1" cy="366.8" r="2.3"/><circle cx="943.4" cy="367.9" r="2.3"/><circle cx="943.7" cy="368.2" r="2.3"/><circle cx="943.3" cy="370.5" r="2.3"/><circle cx="943.6" cy="370.4" r="2.3"/><circle cx="942.9" cy="372.1" r="2.3"/><circle cx="942.9" cy="372.9" r="2.3"/><circle cx="943.0" cy="374.8" r="2.3"/><circle cx="943.7" cy="376.4" r="2.3"/><circle cx="943.1" cy="377.3" r="2.3"/><circle cx="943.7" cy="377.6" r="2.3"/><circle cx="943.9" cy="380.1" r="2.3"/><circle cx="943.3" cy="381.3" r="2.3"/><circle cx="943.6" cy="381.8" r="2.3"/><circle cx="947.0" cy="400.0" r="2.3"/><circle cx="942.0" cy="407.2" r="2.3"/><circle cx="935.8" cy="404.9" r="2.3"/><circle cx="927.8" cy="406.8" r="2.3"/><circle cx="921.2" cy="401.9" r="2.3"/><circle cx="912.8" cy="403.7" r="2.3"/><circle cx="904.0" cy="406.8" r="2.3"/><circle cx="895.8" cy="406.8" r="2.3"/><circle cx="885.8" cy="404.9" r="2.3"/><circle cx="877.0" cy="408.2" r="2.3"/><circle cx="866.8" cy="404.9" r="2.3"/><circle cx="857.6" cy="408.0" r="2.3"/><circle cx="847.8" cy="402.9" r="2.3"/><circle cx="838.7" cy="408.0" r="2.3"/><circle cx="831.2" cy="412.0" r="2.3"/><circle cx="821.8" cy="412.0" r="2.3"/><circle cx="812.0" cy="408.0" r="2.3"/><circle cx="801.9" cy="403.8" r="2.3"/><circle cx="793.0" cy="406.9" r="2.3"/><circle cx="783.1" cy="408.7" r="2.3"/><circle cx="773.0" cy="401.0" r="2.3"/><circle cx="764.8" cy="402.9" r="2.3"/><circle cx="755.5" cy="408.0" r="2.3"/><circle cx="746.8" cy="412.0" r="2.3"/><circle cx="737.4" cy="406.9" r="2.3"/><circle cx="728.0" cy="404.5" r="2.3"/><circle cx="721.0" cy="406.9" r="2.3"/><circle cx="712.1" cy="408.7" r="2.3"/><circle cx="704.6" cy="412.7" r="2.3"/><circle cx="696.0" cy="413.9" r="2.3"/><circle cx="688.2" cy="408.0" r="2.3"/><circle cx="679.8" cy="408.7" r="2.3"/><circle cx="671.6" cy="405.7" r="2.3"/><circle cx="664.6" cy="405.7" r="2.3"/><circle cx="655.7" cy="402.9" r="2.3"/><circle cx="647.7" cy="402.9" r="2.3"/><circle cx="641.9" cy="404.5" r="2.3"/><circle cx="635.8" cy="405.0" r="2.3"/><circle cx="628.3" cy="402.9" r="2.3"/><circle cx="621.9" cy="402.9" r="2.3"/><circle cx="614.9" cy="401.0" r="2.3"/><circle cx="610.0" cy="404.0" r="2.3"/><circle cx="603.0" cy="402.2" r="2.3"/><circle cx="596.6" cy="404.0" r="2.3"/><circle cx="592.0" cy="399.8" r="2.3"/><circle cx="586.1" cy="399.8" r="2.3"/><circle cx="576.7" cy="401.0" r="2.3"/><circle cx="570.9" cy="402.2" r="2.3"/><circle cx="562.2" cy="406.9" r="2.3"/><circle cx="556.8" cy="403.8" r="2.3"/><circle cx="552.1" cy="404.5" r="2.3"/><circle cx="545.0" cy="402.9" r="2.3"/><circle cx="536.9" cy="402.2" r="2.3"/><circle cx="531.9" cy="403.4" r="2.3"/><circle cx="527.5" cy="404.5" r="2.3"/><circle cx="523.3" cy="404.3" r="2.3"/><circle cx="519.3" cy="405.7" r="2.3"/><circle cx="514.7" cy="404.7" r="2.3"/><circle cx="511.0" cy="404.5" r="2.3"/><circle cx="505.2" cy="402.2" r="2.3"/><circle cx="499.8" cy="401.0" r="2.3"/><circle cx="496.8" cy="402.3" r="2.3"/><circle cx="494.7" cy="405.7" r="2.3"/><circle cx="492.2" cy="404.5" r="2.3"/><circle cx="490.0" cy="404.5" r="2.3"/><circle cx="487.9" cy="403.6" r="2.3"/><circle cx="484.7" cy="405.7" r="2.3"/><circle cx="482.8" cy="404.5" r="2.3"/><circle cx="479.4" cy="406.9" r="2.3"/><circle cx="477.5" cy="407.0" r="2.3"/><circle cx="475.5" cy="407.6" r="2.3"/><circle cx="473.6" cy="411.1" r="2.3"/><circle cx="471.6" cy="410.8" r="2.3"/><circle cx="470.1" cy="412.1" r="2.3"/><circle cx="467.7" cy="412.0" r="2.3"/><circle cx="466.1" cy="413.1" r="2.3"/><circle cx="465.5" cy="412.0" r="2.3"/><circle cx="465.6" cy="410.2" r="2.3"/><circle cx="465.1" cy="406.9" r="2.3"/><circle cx="465.3" cy="407.1" r="2.3"/><circle cx="465.1" cy="404.8" r="2.3"/><circle cx="464.5" cy="402.2" r="2.3"/><circle cx="463.7" cy="400.9" r="2.3"/><circle cx="462.2" cy="398.3" r="2.3"/><circle cx="461.8" cy="398.3" r="2.3"/><circle cx="461.8" cy="399.6" r="2.3"/><circle cx="461.4" cy="403.0" r="2.3"/><circle cx="459.6" cy="404.2" r="2.3"/><circle cx="457.3" cy="406.6" r="2.3"/><circle cx="455.9" cy="408.4" r="2.3"/><circle cx="453.9" cy="407.5" r="2.3"/><circle cx="452.4" cy="405.4" r="2.3"/><circle cx="451.2" cy="408.1" r="2.3"/><circle cx="449.7" cy="406.1" r="2.3"/><circle cx="447.8" cy="404.4" r="2.3"/><circle cx="446.7" cy="407.1" r="2.3"/><circle cx="445.1" cy="404.2" r="2.3"/><circle cx="443.9" cy="402.2" r="2.3"/><circle cx="441.9" cy="403.8" r="2.3"/><circle cx="441.1" cy="400.8" r="2.3"/><circle cx="439.5" cy="399.8" r="2.3"/><circle cx="437.6" cy="397.6" r="2.3"/><circle cx="436.2" cy="400.2" r="2.3"/><circle cx="434.8" cy="398.3" r="2.3"/><circle cx="433.0" cy="398.8" r="2.3"/><circle cx="432.0" cy="398.1" r="2.3"/><circle cx="430.5" cy="396.9" r="2.3"/><circle cx="428.5" cy="397.8" r="2.3"/><circle cx="427.7" cy="398.9" r="2.3"/><circle cx="425.8" cy="399.8" r="2.3"/><circle cx="424.5" cy="398.7" r="2.3"/><circle cx="423.1" cy="399.8" r="2.3"/><circle cx="421.8" cy="401.6" r="2.3"/><circle cx="419.7" cy="402.0" r="2.3"/><circle cx="418.4" cy="404.3" r="2.3"/><circle cx="417.1" cy="402.6" r="2.3"/><circle cx="415.3" cy="404.5" r="2.3"/><circle cx="414.2" cy="403.3" r="2.3"/><circle cx="412.1" cy="406.6" r="2.3"/><circle cx="410.3" cy="405.9" r="2.3"/><circle cx="408.6" cy="407.2" r="2.3"/><circle cx="407.5" cy="406.9" r="2.3"/><circle cx="406.2" cy="407.0" r="2.3"/><circle cx="404.8" cy="405.6" r="2.3"/><circle cx="403.0" cy="406.6" r="2.3"/><circle cx="401.2" cy="406.0" r="2.3"/><circle cx="399.8" cy="405.3" r="2.3"/><circle cx="398.5" cy="407.0" r="2.3"/><circle cx="396.6" cy="404.5" r="2.3"/><circle cx="395.6" cy="406.6" r="2.3"/><circle cx="394.3" cy="408.2" r="2.3"/><circle cx="393.9" cy="410.9" r="2.3"/><circle cx="393.2" cy="409.2" r="2.3"/><circle cx="391.9" cy="411.6" r="2.3"/><circle cx="390.2" cy="413.1" r="2.3"/><circle cx="388.3" cy="413.0" r="2.3"/><circle cx="386.8" cy="412.2" r="2.3"/><circle cx="385.6" cy="414.7" r="2.3"/><circle cx="383.6" cy="415.7" r="2.3"/><circle cx="382.1" cy="413.2" r="2.3"/><circle cx="380.8" cy="415.7" r="2.3"/><circle cx="379.4" cy="413.9" r="2.3"/><circle cx="378.8" cy="412.1" r="2.3"/><circle cx="379.1" cy="412.5" r="2.3"/><circle cx="379.2" cy="410.8" r="2.3"/><circle cx="378.5" cy="407.3" r="2.3"/><circle cx="378.6" cy="406.1" r="2.3"/><circle cx="376.6" cy="409.4" r="2.3"/><circle cx="375.4" cy="407.7" r="2.3"/><circle cx="373.1" cy="410.8" r="2.3"/><circle cx="371.2" cy="410.4" r="2.3"/><circle cx="369.7" cy="412.3" r="2.3"/><circle cx="368.5" cy="412.1" r="2.3"/><circle cx="366.9" cy="413.9" r="2.3"/><circle cx="364.5" cy="415.5" r="2.3"/><circle cx="363.4" cy="413.6" r="2.3"/><circle cx="363.1" cy="412.7" r="2.3"/><circle cx="363.1" cy="411.7" r="2.3"/><circle cx="362.0" cy="409.8" r="2.3"/><circle cx="361.4" cy="407.7" r="2.3"/><circle cx="360.0" cy="404.1" r="2.3"/><circle cx="358.3" cy="404.5" r="2.3"/><circle cx="356.9" cy="406.2" r="2.3"/><circle cx="355.0" cy="406.8" r="2.3"/><circle cx="352.8" cy="406.0" r="2.3"/><circle cx="351.1" cy="405.3" r="2.3"/><circle cx="349.2" cy="406.1" r="2.3"/><circle cx="348.0" cy="405.3" r="2.3"/><circle cx="346.0" cy="402.4" r="2.3"/><circle cx="344.6" cy="401.7" r="2.3"/><circle cx="343.4" cy="402.2" r="2.3"/><circle cx="341.7" cy="399.7" r="2.3"/><circle cx="339.8" cy="399.6" r="2.3"/><circle cx="338.8" cy="400.6" r="2.3"/><circle cx="337.0" cy="400.4" r="2.3"/><circle cx="335.5" cy="403.0" r="2.3"/><circle cx="334.6" cy="400.3" r="2.3"/><circle cx="332.8" cy="401.5" r="2.3"/><circle cx="331.5" cy="400.9" r="2.3"/><circle cx="330.2" cy="403.0" r="2.3"/><circle cx="329.7" cy="407.0" r="2.3"/><circle cx="328.6" cy="406.5" r="2.3"/><circle cx="327.8" cy="408.4" r="2.3"/></g>
<rect x="846.5" y="197.5" width="76" height="23" fill="#fff" stroke="#000" stroke-width="1"/>
<path d="M858 202 L864 208 L858 214 L852 208Z" fill="#ff6633"/>
<text x="870.5" y="214" font-family="Liberation Sans" font-size="12" fill="#ff6633" filter="url(#crisp)">Run #1</text>
</g></svg>
<div class="a" style="left:238px;top:110px;width:20px;height:20px;background:#c0c0c0;box-shadow:inset -1px -1px #000,inset 1px 1px #fff,inset -2px -2px #808080"></div>
<div class="a" style="left:264px;top:110px;width:20px;height:20px;background:#c0c0c0;box-shadow:inset -1px -1px #000,inset 1px 1px #fff,inset -2px -2px #808080"></div>
<div class="a" style="left:290px;top:110px;width:20px;height:20px;background:#c0c0c0;box-shadow:inset -1px -1px #000,inset 1px 1px #fff,inset -2px -2px #808080"></div>
<div class="a" style="left:342px;top:110px;width:20px;height:20px;background:#c0c0c0;box-shadow:inset -1px -1px #000,inset 1px 1px #fff,inset -2px -2px #808080"></div>
<div class="a" style="left:368px;top:110px;width:20px;height:20px;background:#c0c0c0;box-shadow:inset -1px -1px #000,inset 1px 1px #fff,inset -2px -2px #808080"></div>
<div class="a" style="left:394px;top:110px;width:56px;height:20px;background:#c0c0c0;box-shadow:inset -1px -1px #000,inset 1px 1px #fff,inset -2px -2px #808080"></div>
<div class="a" style="left:455px;top:110px;width:20px;height:20px;background:#c0c0c0;box-shadow:inset -1px -1px #000,inset 1px 1px #fff,inset -2px -2px #808080"></div>
<div class="a" style="left:481px;top:110px;width:20px;height:20px;background:#c0c0c0;box-shadow:inset -1px -1px #000,inset 1px 1px #fff,inset -2px -2px #808080"></div>
<div class="a" style="left:507px;top:110px;width:20px;height:20px;background:#c0c0c0;box-shadow:inset -1px -1px #000,inset 1px 1px #fff,inset -2px -2px #808080"></div>
<div class="a" style="left:527px;top:110px;width:14px;height:20px;background:#c0c0c0;box-shadow:inset -1px -1px #000,inset 1px 1px #fff,inset -2px -2px #808080"></div>
<div class="a" style="left:547px;top:110px;width:67px;height:20px;background:#c0c0c0;box-shadow:inset -1px -1px #000,inset 1px 1px #fff,inset -2px -2px #808080"></div>
<div class="a" style="left:620px;top:110px;width:20px;height:20px;background:#c0c0c0;box-shadow:inset -1px -1px #000,inset 1px 1px #fff,inset -2px -2px #808080"></div>
<div class="a" style="left:646px;top:110px;width:20px;height:20px;background:#c0c0c0;box-shadow:inset -1px -1px #000,inset 1px 1px #fff,inset -2px -2px #808080"></div>
<div class="a" style="left:666px;top:110px;width:14px;height:20px;background:#c0c0c0;box-shadow:inset -1px -1px #000,inset 1px 1px #fff,inset -2px -2px #808080"></div>
<div class="a" style="left:316px;top:110px;width:20px;height:20px;background:#c0c0c0;box-shadow:inset 1px 1px #000,inset -1px -1px #fff,inset 2px 2px #808080"></div>
<svg class="a" style="left:242px;top:112px" width="16" height="16" viewBox="0 0 16 16"><circle cx="5.5" cy="5.5" r="4.3" fill="#fff" stroke="#000" stroke-width="2"/><path d="M8.5 8.5 L13.5 13.5" stroke="#000" stroke-width="3.2"/><path d="M3 5.5 H8 M5.5 3 V8" stroke="#000" stroke-width="2"/></svg>
<svg class="a" style="left:268px;top:112px" width="16" height="16" viewBox="0 0 16 16"><circle cx="5.5" cy="5.5" r="4.3" fill="#fff" stroke="#000" stroke-width="2"/><path d="M8.5 8.5 L13.5 13.5" stroke="#000" stroke-width="3.2"/><path d="M3 5.5 H8" stroke="#000" stroke-width="2"/></svg>
<svg class="a" style="left:292px;top:112px" width="17" height="17" viewBox="0 0 17 17"><rect x="0.5" y="0.5" width="14" height="12" fill="none" stroke="#000" stroke-dasharray="1 1"/><circle cx="7" cy="8" r="4.3" fill="#fff" stroke="#000" stroke-width="2"/><path d="M10 11 L15 16" stroke="#000" stroke-width="3.2"/><path d="M4.5 8 H9.5 M7 5.5 V10.5" stroke="#000" stroke-width="2"/></svg>
<svg class="a" style="left:319px;top:112px" width="16" height="16" viewBox="0 0 16 16"><path d="M1.5 1 V15 H15" stroke="#000" fill="none"/><path d="M0 4 H2 M0 7 H2 M0 10 H2 M4 16 V14 M7 16 V14 M10 16 V14 M13 16 V14" stroke="#000"/><rect x="6" y="8" width="7" height="6" fill="#e00"/><rect x="6" y="8" width="2" height="6" fill="#a06020"/><path d="M7.5 8 V5.5 A2 2 0 0 1 11.5 5.5 V8" stroke="#606060" stroke-width="1.4" fill="none"/></svg>
<svg class="a" style="left:344px;top:112px" width="16" height="16" viewBox="0 0 16 16"><path d="M6 2 V15 M1 10 H15" stroke="#606060" stroke-dasharray="1 1"/><text x="8" y="8" font-size="6" font-family="Liberation Sans" fill="#e00">xy</text></svg>
<svg class="a" style="left:370px;top:112px" width="16" height="16" viewBox="0 0 16 16"><path d="M1 8 L7 4 L15 2" stroke="#000" fill="none"/><path d="M2 14 C5 6 10 3 14 7" stroke="#e00" fill="none" stroke-width="1.3"/></svg>
<svg class="a" style="left:397px;top:112px" width="17" height="17" viewBox="0 0 17 17"><path d="M1 16 L16 1" stroke="#000"/><circle cx="3" cy="12" r="1.5" fill="#e00"/><circle cx="7" cy="9" r="1.5" fill="#e00"/><circle cx="10" cy="7" r="1.5" fill="#e00"/><circle cx="14" cy="3" r="1.5" fill="#e00"/></svg>
<div class="t" style="left:416px;top:113px;font-size:13px">Fit</div>
<svg class="a" style="left:436px;top:118px" width="8" height="4"><path d="M0 0 H8 L4 4Z" fill="#000"/></svg>
<svg class="a" style="left:457px;top:112px" width="16" height="16" viewBox="0 0 16 16"><rect x="1" y="1" width="14" height="14" rx="2" fill="#000"/><rect x="3" y="3" width="10" height="2" fill="#fff"/><path d="M3 7.5 H13 M3 10 H13 M3 12.5 H13" stroke="#fff" stroke-width="1.2" stroke-dasharray="1.5 1"/></svg>
<div class="t" style="left:482px;top:109px;font-size:22px;font-family:'Liberation Serif'">A</div>
<div class="t" style="left:509px;top:110px;font-size:19px;font-family:'Liberation Serif'">&Sigma;</div>
<svg class="a" style="left:530px;top:118px" width="8" height="4"><path d="M0 0 H8 L4 4Z" fill="#000"/></svg>
<svg class="a" style="left:551px;top:112px" width="14" height="16" viewBox="0 0 16 16"><path d="M7 0 V4 M7 4 L3 8 M7 4 L11 8 M3 8 C3 12 11 12 11 8" stroke="#000" fill="none"/><circle cx="7" cy="11" r="2.6" fill="#e00" stroke="#000" stroke-width="0.8"/></svg>
<div class="t" style="left:568px;top:113px;font-size:13px">Data</div>
<svg class="a" style="left:601px;top:118px" width="8" height="4"><path d="M0 0 H8 L4 4Z" fill="#000"/></svg>
<svg class="a" style="left:623px;top:113px" width="14" height="14"><path d="M2 2 L12 12 M12 2 L2 12" stroke="#e00000" stroke-width="2.2"/></svg>
<svg class="a" style="left:647px;top:111px" width="17" height="17" viewBox="0 0 17 17"><rect x="1" y="1" width="15" height="12" fill="#fff"/><path d="M3 2.5 H16 M3 6 H16 M3 9.5 H16 M3 13 H16" stroke="#0090ff" stroke-width="1.2" stroke-dasharray="1.2 2.6"/><path d="M3.5 1 V15 M1 12.5 H16" stroke="#404040" fill="none"/><path d="M3.5 10 L7 6.5 L11 6.5 L15.5 1.5" stroke="#e00" fill="none" stroke-width="1.1"/><path d="M5 15.5 H7 M8.5 15.5 H10.5 M12 15.5 H14" stroke="#000" stroke-width="2"/></svg>
<svg class="a" style="left:669px;top:118px" width="8" height="4"><path d="M0 0 H8 L4 4Z" fill="#000"/></svg>
<div class="a" style="left:1008px;top:84px;width:3px;height:650px;background:#c0c0c0"></div>
<div class="a" style="left:1011px;top:84px;width:1px;height:653px;background:#000"></div>
<div class="a" style="left:1012px;top:77px;width:10px;height:660px;background:#c0c0c0"></div>
<div class="a" style="left:1012px;top:81px;width:10px;height:19px;background:#808080"></div>
<div class="a" style="left:1013px;top:84px;width:9px;height:12px;background:#c0c0c0;box-shadow:inset 1px 1px #fff,inset -1px -1px #000"></div>
<div class="a" style="left:1014px;top:86px;width:8px;height:8px;border:1px solid #000;border-top-width:2px;border-right:none"></div>
<div class="a" style="left:1012px;top:101px;width:10px;height:1px;background:#fff"></div>
<div class="a" style="left:1012px;top:128px;width:10px;height:1px;background:#000"></div>
<div class="a" style="left:1012px;top:129px;width:10px;height:96px;background:#fff"></div>
<div class="a" style="left:1012px;top:149px;width:10px;height:1px;background:#808080"></div>
<div class="a" style="left:1012px;top:225px;width:10px;height:1px;background:#000"></div>
<div class="a" style="left:1012px;top:227px;width:10px;height:2px;background:#fff"></div>
<div class="a" style="left:1012px;top:233px;width:10px;height:19px;background:#808080"></div>
<div class="a" style="left:1013px;top:237px;width:9px;height:12px;background:#c0c0c0;box-shadow:inset 1px 1px #fff,inset -1px -1px #000"></div>
<div class="a" style="left:1014px;top:239px;width:8px;height:8px;border:1px solid #000;border-top-width:2px;border-right:none"></div>
<div class="a" style="left:1012px;top:254px;width:10px;height:1px;background:#fff"></div>
<div class="a" style="left:1012px;top:280px;width:10px;height:2px;background:#000"></div>
<div class="a" style="left:1012px;top:282px;width:10px;height:96px;background:#fff"></div>
<div class="a" style="left:1012px;top:303px;width:10px;height:1px;background:#808080"></div>
<div class="a" style="left:1012px;top:378px;width:10px;height:1px;background:#000"></div>
<div class="a" style="left:1012px;top:380px;width:10px;height:2px;background:#fff"></div>
<div class="a" style="left:1012px;top:391px;width:10px;height:21px;background:#808080"></div>
<div class="a" style="left:1013px;top:397px;width:9px;height:12px;background:#c0c0c0;box-shadow:inset 1px 1px #fff,inset -1px -1px #000"></div>
<div class="a" style="left:1014px;top:399px;width:8px;height:8px;border:1px solid #000;border-top-width:2px;border-right:none"></div>
<div class="a" style="left:1012px;top:413px;width:10px;height:1px;background:#fff"></div>
<div class="a" style="left:1012px;top:438px;width:10px;height:3px;background:#000"></div>
<div class="a" style="left:1012px;top:441px;width:10px;height:96px;background:#fff"></div>
<div class="a" style="left:1012px;top:461px;width:10px;height:1px;background:#808080"></div>
<div class="a" style="left:1012px;top:537px;width:10px;height:1px;background:#000"></div>
<div class="a" style="left:1012px;top:539px;width:10px;height:2px;background:#fff"></div>
<div class="a" style="left:1012px;top:546px;width:10px;height:20px;background:#808080"></div>
<div class="a" style="left:1013px;top:553px;width:9px;height:12px;background:#c0c0c0;box-shadow:inset 1px 1px #fff,inset -1px -1px #000"></div>
<div class="a" style="left:1014px;top:555px;width:8px;height:8px;border:1px solid #000;border-top-width:2px;border-right:none"></div>
<div class="a" style="left:1012px;top:567px;width:10px;height:1px;background:#fff"></div>
<div class="a" style="left:1012px;top:597px;width:10px;height:3px;background:#000"></div>
<div class="a" style="left:1012px;top:600px;width:10px;height:90px;background:#fff"></div>
<div class="a" style="left:1012px;top:619px;width:10px;height:1px;background:#808080"></div>
<div class="a" style="left:1012px;top:690px;width:10px;height:1px;background:#000"></div>
<div class="a" style="left:1012px;top:692px;width:10px;height:2px;background:#fff"></div>
<div class="a" style="left:1012px;top:197px;width:10px;height:25px;overflow:hidden"><div class="t" style="left:-7px;top:2px;font-size:23px;transform:scaleX(0.85);transform-origin:0 0">kP</div></div>
<div class="a" style="left:1012px;top:512px;width:10px;height:22px;overflow:hidden"><div class="t" style="left:-7px;top:0px;font-size:23px;transform:scaleX(0.85);transform-origin:0 0">n^</div></div>
<div class="a" style="left:1012px;top:698px;width:10px;height:39px;background:#808080"></div>
<div class="a" style="left:1022px;top:76px;width:2px;height:662px;background:#dfdfdf"></div>
<div class="a" style="left:0;top:737px;width:237px;height:1px;background:#909090"></div>
<div class="a" style="left:0;top:738px;width:1024px;height:30px;background:#c0c0c0;box-shadow:inset 0 2px #fff,inset 0 3px #c0c0c0,inset 0 4px #fff"></div>
<div class="a raised" style="left:2px;top:744px;width:55px;height:22px"></div>
<svg class="a" style="left:6px;top:747px" width="17" height="16" viewBox="0 0 17 16">
<path d="M0 4 H3 M0 7 H3 M0 10 H3 M0 13 H3" stroke="#e00" stroke-dasharray="1 1"/>
<path d="M4 3 L9 2 V7 L4 8Z" fill="#f00"/><path d="M10 2 L16 1 V7 L10 7Z" fill="#0a0"/>
<path d="M4 9 L9 8 V14 L4 15Z" fill="#00f"/><path d="M10 8 H16 V14 L10 14Z" fill="#ff0"/>
<path d="M3.5 2 V16 M9.5 1 V15" stroke="#000" stroke-width="1"/>
</svg>
<div class="t" style="left:25px;top:749px;font-size:12px;font-weight:bold">Start</div>
<div class="a" style="left:59px;top:744px;width:2px;height:22px;border-left:1px solid #808080;border-right:1px solid #fff"></div>
<div class="a" style="left:62px;top:746px;width:3px;height:18px;border-left:1px solid #fff;border-right:1px solid #808080;border-top:1px solid #fff;border-bottom:1px solid #808080"></div>
<svg class="a" style="left:72px;top:747px" width="17" height="17" viewBox="0 0 17 17"><rect x="1" y="1" width="15" height="14" fill="#2a7ad0"/><path d="M3 7 L9 3 L14 9 L8 13Z" fill="#f0e8d0" stroke="#000"/><path d="M6 9 L14 1" stroke="#fc0" stroke-width="2.2"/></svg>
<svg class="a" style="left:95px;top:747px" width="17" height="17" viewBox="0 0 17 17"><rect x="1" y="1" width="14" height="14" fill="#fff" stroke="#d00" stroke-width="1.5"/><path d="M4 12 C6 8 8 5 8 3 C8 6 10 9 13 10 C10 10 7 11 4 12Z" fill="none" stroke="#e00" stroke-width="1.4"/></svg>
<svg class="a" style="left:118px;top:747px" width="17" height="17" viewBox="0 0 17 17"><path d="M1 4 C5 1 11 1 16 4 L13 6 L11 6 V14 L6 15 V8 L3 6Z" fill="#777" stroke="#333"/><path d="M1 4 C5 1 11 1 16 4" stroke="#dd9" stroke-width="2" fill="none"/></svg>
<svg class="a" style="left:142px;top:747px" width="17" height="17" viewBox="0 0 17 17"><path d="M2 4 L8 2 L13 5 L13 15 L2 15Z" fill="#fff" stroke="#888"/><path d="M6 12 L14 3 L16 1" stroke="#cc0" stroke-width="2.5"/><path d="M13 1 L16 0 L15 4Z" fill="#00c"/><text x="2" y="13" font-size="6" fill="#c00" font-family="Liberation Sans">2</text></svg>
<svg class="a" style="left:164px;top:747px" width="17" height="17" viewBox="0 0 17 17"><rect x="0.5" y="3.5" width="16" height="10" rx="1" fill="#00a0b0" stroke="#000"/><rect x="3" y="6" width="11" height="5" fill="#fff"/><path d="M3 8.5 H14" stroke="#004060" stroke-dasharray="1 1" stroke-width="1.5"/></svg>
<svg class="a" style="left:187px;top:747px" width="17" height="17" viewBox="0 0 17 17"><rect x="0.5" y="0.5" width="15" height="15" fill="#a0c0f0" stroke="#246"/><path d="M2 6 C4 3 10 2 15 5 L14 12 C10 15 5 15 2 12Z" fill="#d04020"/><path d="M5 6 H9" stroke="#000"/></svg>
<svg class="a" style="left:210px;top:747px" width="17" height="17" viewBox="0 0 17 17"><ellipse cx="8.5" cy="8" rx="5" ry="7" fill="none" stroke="#c00" stroke-width="2.6"/><path d="M1 13 C3 10 6 12 5 14" stroke="#888" stroke-width="2" fill="none"/></svg>
<svg class="a" style="left:233px;top:747px" width="17" height="17" viewBox="0 0 17 17"><path d="M5 1 L8 6 L11 0 L16 3 L12 9 H3Z" fill="#ff4000"/><rect x="1" y="9" width="15" height="6" rx="2" fill="#000"/><path d="M3 11 H14 M4 13 H13" stroke="#fff" stroke-dasharray="1 1"/></svg>
<div class="a" style="left:259px;top:744px;width:2px;height:22px;border-left:1px solid #808080;border-right:1px solid #fff"></div>
<div class="a" style="left:264px;top:746px;width:3px;height:18px;border-left:1px solid #fff;border-right:1px solid #808080;border-top:1px solid #fff;border-bottom:1px solid #808080"></div>
<div class="a" style="left:272px;top:744px;width:160px;height:22px;background:repeating-conic-gradient(#c0c0c0 0 25%,#fff 0 50%) 0 0/2px 2px;box-shadow:inset 1px 1px #000,inset -1px -1px #fff,inset 2px 2px #808080,inset -2px -2px #dfdfdf"></div>
<svg class="a" style="left:274px;top:746px" width="19" height="18" viewBox="0 0 19 18"><path d="M2.5 7.5 L7.5 2.5 L11.5 2.5 L17 8 L17 12 L11.5 16.5 Z" fill="#fff" stroke="#000"/><path d="M7 5 L8.8 6.8 M5 7.2 L6.5 8.5 L8.2 8.5" stroke="#f00" stroke-width="1.2" fill="none"/><rect x="12.5" y="6.5" width="4" height="5" fill="#b0b0b0"/><rect x="16" y="7" width="2" height="4" fill="#000"/><path d="M8.5 11 L11 13.5 M10.5 10 L13 12.5 M13 9.5 H15" stroke="#000" stroke-width="1.2"/><path d="M10 8.5 L15.5 3" stroke="#ff0" stroke-width="1.6"/><path d="M15.3 3.2 L17 1.5" stroke="#f00" stroke-width="1.8"/></svg>
<div class="t" style="left:295px;top:750px;font-size:12px;font-weight:bold;letter-spacing:0.15px">DataStudio - tepelny_...</div>
<div class="a" style="left:823px;top:744px;width:199px;height:22px;box-shadow:inset 1px 1px #808080,inset -1px -1px #fff"></div>
<div class="a" style="left:827px;top:747px;width:16px;height:16px;background:#000080"></div>
<div class="t" style="left:828px;top:749px;font-size:12px;color:#fff">En</div>
<svg class="a" style="left:845px;top:747px" width="17" height="16" viewBox="0 0 17 16"><path d="M1 5 H4 L8 1 V15 L4 11 H1Z" fill="#ee4" stroke="#000" stroke-width="0.8"/><path d="M10 4 L13 2 M10 8 H14 M10 12 L13 14" stroke="#999"/></svg>
<svg class="a" style="left:862px;top:747px" width="17" height="16" viewBox="0 0 17 16"><path d="M1 9 L9 2 L15 6 L7 14Z" fill="#ee4" stroke="#000"/><path d="M4 9 L10 4 M6 11 L12 6" stroke="#880"/></svg>
<svg class="a" style="left:878px;top:747px" width="17" height="16" viewBox="0 0 17 16"><rect x="1" y="1" width="12" height="11" fill="#fff" stroke="#000"/><path d="M1 3 H13" stroke="#00a" stroke-width="2"/><circle cx="11" cy="12" r="3.5" fill="#fff" stroke="#c00" stroke-width="1.4"/></svg>
<svg class="a" style="left:895px;top:747px" width="17" height="16" viewBox="0 0 17 16"><path d="M1 14 L6 3 H16 V14Z" fill="#d00"/><text x="5" y="12" font-size="9" font-weight="bold" fill="#fff" font-family="Liberation Sans">ATI</text></svg>
<svg class="a" style="left:912px;top:747px" width="17" height="16" viewBox="0 0 17 16"><path d="M4 1 L12 1 L13 7 L16 10 L12 14 H2 L0 10 L4 7Z" fill="#900"/><rect x="2" y="13" width="13" height="2" fill="#000"/></svg>
<svg class="a" style="left:929px;top:747px" width="17" height="16" viewBox="0 0 17 16"><rect x="0" y="0" width="16" height="16" fill="#e02020"/><path d="M8 1 L5 8 H11 L8 15" stroke="#fff" stroke-width="2" fill="none"/></svg>
<svg class="a" style="left:946px;top:747px" width="17" height="16" viewBox="0 0 17 16"><circle cx="6" cy="8" r="5" fill="#0040e0"/><path d="M9 6 H16 L13 3 M9 10 H16 L13 13" stroke="#0a0" stroke-width="2" fill="none"/></svg>
<svg class="a" style="left:963px;top:747px" width="17" height="16" viewBox="0 0 17 16"><rect x="0" y="0" width="16" height="16" fill="#fff"/><rect x="0" y="2" width="16" height="3" fill="#0dd"/><rect x="0" y="12" width="16" height="3" fill="#0dd"/><path d="M1 13 C5 4 9 12 15 3" stroke="#000" stroke-width="1.6" fill="none"/></svg>
<div class="t" style="left:988px;top:751px;font-size:11.5px">16:39</div>
</body></html>
